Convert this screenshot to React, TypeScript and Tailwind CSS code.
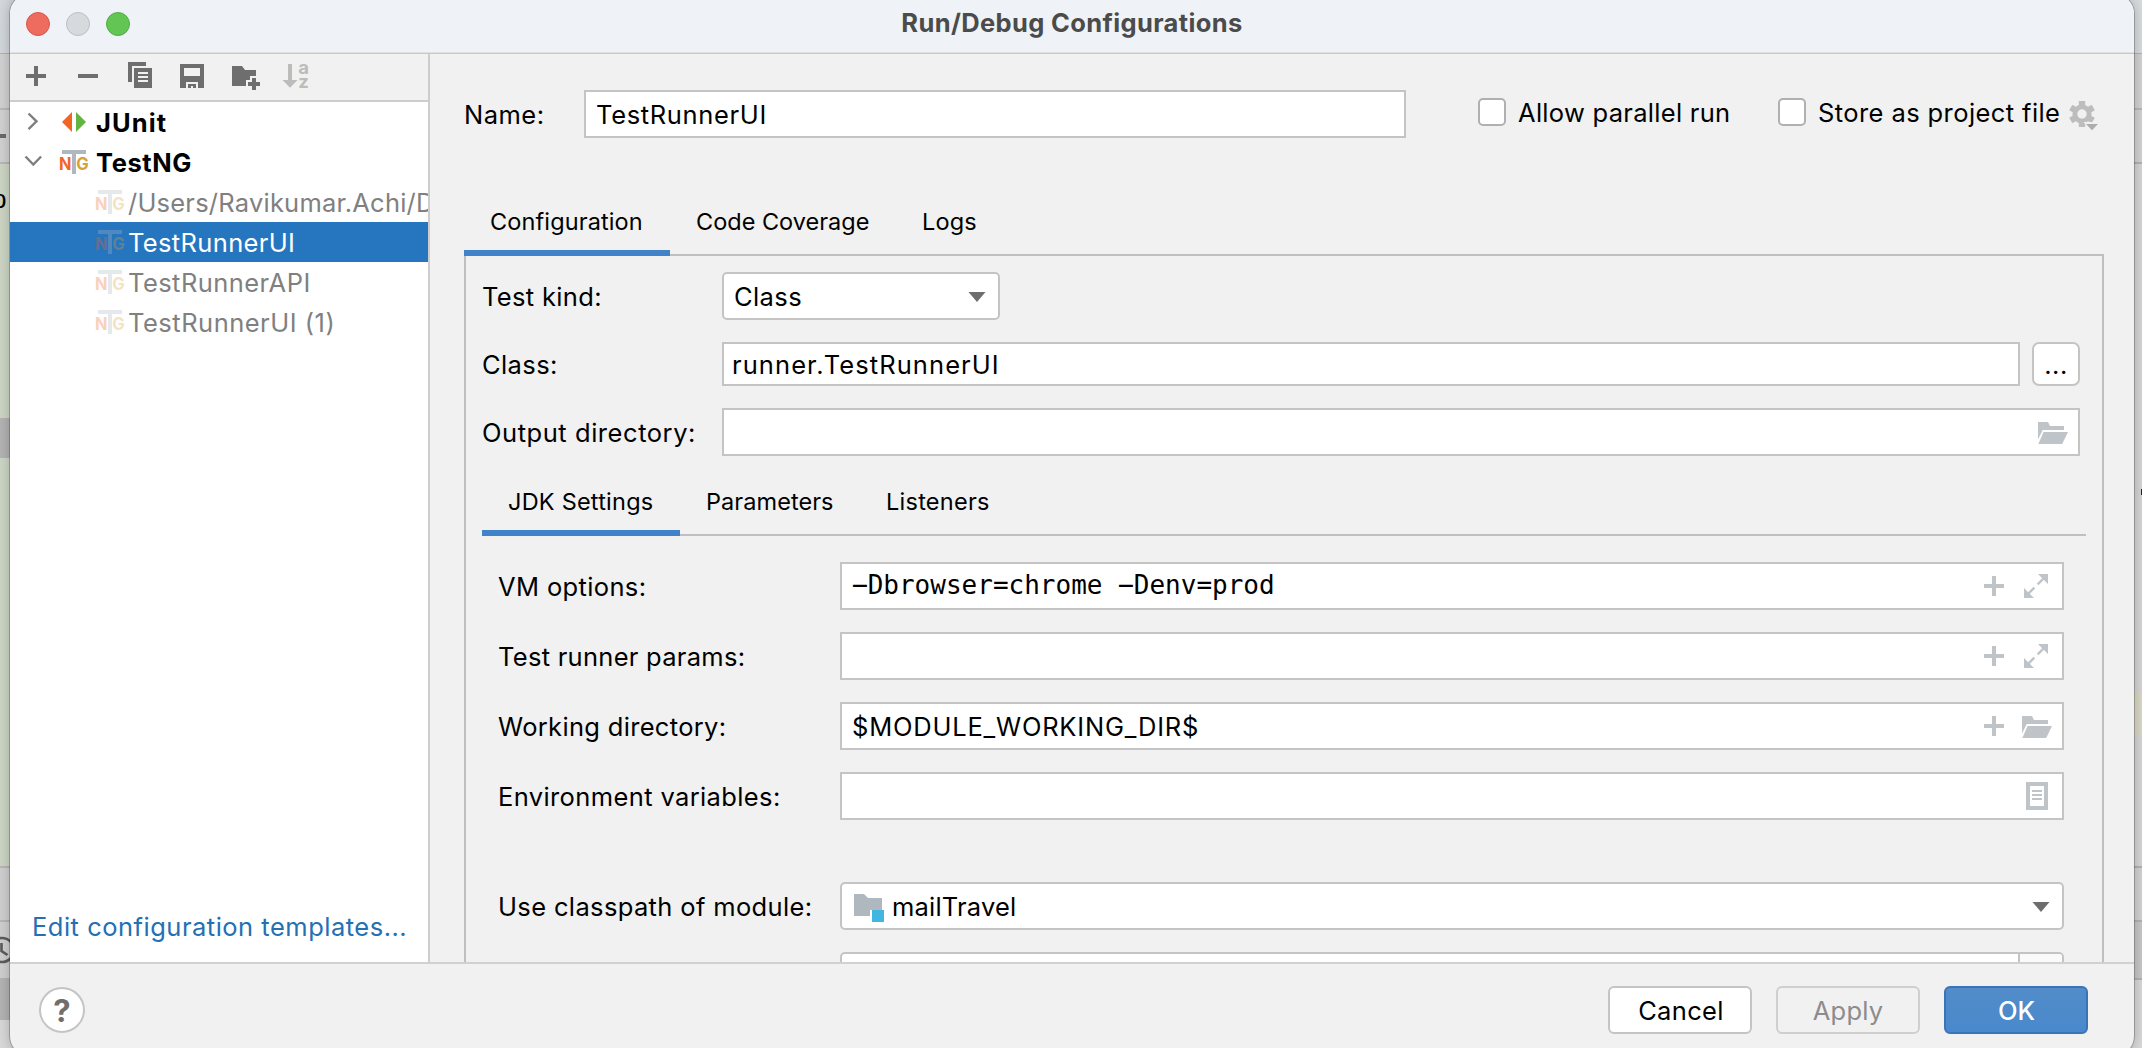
import React from "react";

/* ---------- text ---------- */

function Txt({ className = "", children }: { className?: string; children: React.ReactNode }) {
  return <span className={`block shrink-0 whitespace-nowrap text-[25.5px] leading-[31px] ${className}`}>{children}</span>;
}

/* ---------- icons ---------- */

const ToolIcon = ({ children, muted }: { children: React.ReactNode; muted?: boolean }) => (
  <svg viewBox="0 0 32 32" className={`size-8 shrink-0 overflow-visible ${muted ? "fill-[#bcbcbc]" : "fill-[#6e6e6e]"}`}>
    {children}
  </svg>
);

const Plus = ({ className }: { className: string }) => (
  <svg viewBox="0 0 20 20" className={`size-5 shrink-0 fill-[#bfc4c9] ${className}`}>
    <path d="M8 0h4v8h8v4h-8v8H8v-8H0V8h8z" />
  </svg>
);

const Expand = ({ className }: { className: string }) => (
  <svg viewBox="0 0 24 24" className={`size-6 shrink-0 fill-[#bfc4c9] stroke-[#bfc4c9] ${className}`}>
    <path stroke="none" d="M14 0h10v10zM0 24V14l10 10z" />
    <path fill="none" strokeWidth="2.4" d="M13.7 10.3 20 4M10.3 13.7 4 20" />
  </svg>
);

const OpenFolder = ({ className }: { className: string }) => (
  <svg viewBox="0 0 30 22" className={`h-[22px] w-[30px] shrink-0 fill-[#bfc4c9] ${className}`}>
    <path d="M0 0h10l2 4h14v4H4.7L0 17.5z" />
    <path d="M5.6 10H30l-5.8 12H.3z" />
  </svg>
);

const ListIcon = ({ className }: { className: string }) => (
  <svg viewBox="0 0 22 28" className={`h-7 w-[22px] shrink-0 fill-[#bfc4c9] ${className}`}>
    <path fillRule="evenodd" d="M0 0h22v28H0zM4 4v20h14V4z" />
    <path d="M6 8h10v2H6zM6 12h10v2H6zM6 16h10v2H6z" />
  </svg>
);

const Caret = ({ className }: { className: string }) => (
  <svg viewBox="0 0 18 10" className={`h-[10px] w-[18px] shrink-0 fill-[#6e6e6e] ${className}`}>
    <path d="M.5 0h17L9 10z" />
  </svg>
);

const ModuleIcon = () => (
  <svg viewBox="0 0 30 28" className="mt-[10px] h-7 w-[30px] shrink-0">
    <path fill="#afb8bf" d="M0 0h10l4 4h14v12H16v6H0z" />
    <path fill="#40b6e0" d="M18 16h12v12H18z" />
  </svg>
);

const Gear = () => (
  <svg viewBox="0 0 30 30" className="ml-[10px] mt-[11px] size-[30px] shrink-0">
    <g fill="#bdbdbd">
      <circle cx="13" cy="13" r="9.6" />
      {["rotate(0 13 13)", "rotate(60 13 13)", "rotate(120 13 13)"].map((t) => (
        <rect key={t} x="9.8" y="0" width="6.4" height="26" rx="0.6" transform={t} />
      ))}
    </g>
    <circle cx="13" cy="13" r="4.7" fill="#f1f1f1" />
    <path fill="#f1f1f1" d="M14.5 21H32l-8.8 10z" />
    <path fill="#adadad" d="M17 23h12l-6 6.3z" />
  </svg>
);

const JUnitIcon = () => (
  <svg viewBox="0 0 28 24" className="mt-2 h-6 w-7 shrink-0">
    <path fill="#f26522" d="M12 2v20L2 12z" />
    <path fill="#62b543" d="M16 2v20l10-10z" />
  </svg>
);

const TestNGIcon = ({ faded }: { faded?: boolean }) => (
  <svg viewBox="0 0 28 24" className={`mt-2 h-6 w-7 shrink-0 overflow-visible ${faded ? "opacity-30" : ""}`}>
    <path fill="#afb8bf" d="M2 0h24v4H16v20h-4V4H2z" />
    <text x="-1" y="20.3" fontSize="17.5" fontWeight="700" fill="#f26522" textLength="12.5" lengthAdjust="spacingAndGlyphs">N</text>
    <text x="16.3" y="20.3" fontSize="17.5" fontWeight="700" fill="#dba034" textLength="12.5" lengthAdjust="spacingAndGlyphs">G</text>
  </svg>
);

/* ---------- form pieces ---------- */

function Tab({ active, className, children }: { active?: boolean; className: string; children: React.ReactNode }) {
  return (
    <div className={`h-14 shrink-0 whitespace-nowrap pl-[26px] pt-[7px] text-[23.5px] leading-[29px] ${active ? "border-b-[6px] border-[#4083c9]" : "border-b-2 border-[#bfbfbf]"} ${className}`}>
      {children}
    </div>
  );
}

function Box({ className, children }: { className: string; children?: React.ReactNode }) {
  return <div className={`flex shrink-0 items-start border-2 border-[#c4c4c4] bg-white ${className}`}>{children}</div>;
}

function Row({ label, tracking, className = "", children }: { label: string; tracking: string; className?: string; children?: React.ReactNode }) {
  return (
    <div className={`ml-4 flex h-12 shrink-0 items-start ${className}`}>
      <Txt className={`mt-[9px] w-[342px] ${tracking}`}>{label}</Txt>
      {children}
    </div>
  );
}

function Check({ label, tracking, className }: { label: string; tracking: string; className: string }) {
  return (
    <div className={`flex shrink-0 ${className}`}>
      <div className="mt-2 size-7 shrink-0 rounded-[5px] border-2 border-[#b0b0b0] bg-white" />
      <Txt className={`ml-[12px] mt-[7px] ${tracking}`}>{label}</Txt>
    </div>
  );
}

/* Wide option dash, as in the monospace editor font. */
const Dash = () => <span className="relative -top-px inline-block scale-x-[2.1]">-</span>;

/* ---------- regions ---------- */

function Backdrop() {
  return (
    <div className="absolute inset-0 flex justify-between overflow-hidden bg-[#cdcdcd]">
      <div className="flex w-12 flex-col">
        <div className="h-[53px] bg-[#d3d8dc]" />
        <div className="h-[55px] border-t border-[#b4b4b4] bg-[#d2d2d2]" />
        <div className="h-[54px] border-t-2 border-[#bababa] bg-[#d2d2d2] pt-6">
          <div className="h-1 w-[6px] bg-[#6a6a6a]" />
        </div>
        <div className="h-[256px] border-t-2 border-[#b8b8b8] bg-[#ced7c6] pt-[15px] text-black">
          <div className="ml-[-8px] text-[26px] leading-[40px] font-['Liberation_Sans']">p</div>
        </div>
        <div className="h-[40px] bg-[#b4b4b4]" />
        <div className="h-[408px] bg-[#ced7c6]" />
        <div className="h-[54px] border-t-2 border-[#b8b8b8] bg-[#d0d0d0]" />
        <div className="h-[58px] border-t-2 border-[#b8b8b8] bg-[#d0d0d0] pt-[14px]">
          <svg viewBox="0 0 28 28" className="ml-[-12px] size-7 fill-none stroke-[#5c5c5c] stroke-[2.6]">
            <circle cx="14" cy="14" r="12" />
            <path d="M13.5 7v8l6 4" />
          </svg>
        </div>
        <div className="h-[42px] bg-[#b4b4b4]" />
        <div className="grow bg-[#d9d9d9]" />
      </div>
      <div className="flex w-12 flex-col">
        <div className="h-[53px] bg-[#d9dde0]" />
        <div className="h-[55px] border-t border-[#b4b4b4] bg-[#d3d3d3]" />
        <div className="h-[54px] border-t-2 border-[#b8b8b8] bg-[#d3d3d3]" />
        <div className="h-[530px] border-t-2 border-[#b4b4b4] bg-[#d6d6d6] pt-[325px]">
          <div className="ml-auto h-[6px] w-px bg-[#222]" />
        </div>
        <div className="h-11 bg-[#dad9c8]" />
        <div className="h-[130px] bg-[#d6d6d6]" />
        <div className="h-[54px] border-t-2 border-[#b4b4b4] bg-[#d3d3d3]" />
        <div className="h-[58px] border-t-2 border-[#b4b4b4] bg-[#c8c8c8]" />
        <div className="grow border-t-2 border-[#b4b4b4] bg-[#d9d9d9]" />
      </div>
    </div>
  );
}

function Sidebar() {
  const children = [
    { name: "/Users/Ravikumar.Achi/D", tracking: "tracking-[0.22px]" },
    { name: "TestRunnerUI", tracking: "tracking-[0.35px]", selected: true },
    { name: "TestRunnerAPI", tracking: "tracking-[0.44px]" },
    { name: "TestRunnerUI (1)", tracking: "tracking-[0.5px]" },
  ];
  return (
    <div className="flex w-[420px] shrink-0 flex-col border-r-2 border-[#cdcdcd] bg-white">
      <div className="flex h-12 shrink-0 gap-5 border-b-2 border-[#cdcdcd] bg-[#f1f1f1] pl-[10px] pt-[6px]">
        <ToolIcon><path d="M14 6h4v8h8v4h-8v8h-4v-8H6v-4h8z" /></ToolIcon>
        <ToolIcon><path d="M6 14h20v4H6z" /></ToolIcon>
        <ToolIcon>
          <path d="M4 2h18v4H8v16H4z" />
          <path fillRule="evenodd" d="M10 8h18v20H10zM14 12v2h10v-2zM14 16v2h10v-2zM14 20v2h10v-2z" />
        </ToolIcon>
        <ToolIcon>
          <path fillRule="evenodd" d="M4 4h24v24h-6v-6H10v6H4zM8 8v8h16V8z" />
          <path d="M12 24h8v4h-3v-2h-2v2h-3z" />
        </ToolIcon>
        <ToolIcon>
          <path d="M4 6h10l3 4h11v6h-6v4h-4v6H4z" />
          <path d="M24 18h4v4h4v4h-4v4h-4v-4h-4v-4h4z" />
        </ToolIcon>
        <ToolIcon muted>
          <path d="M8 4h4v16h5.5L10 27.7 2.5 20H8z" />
          <text x="18.3" y="14.3" fontSize="18.5" fontWeight="700">a</text>
          <text x="18.3" y="28" fontSize="18.5" fontWeight="700">z</text>
        </ToolIcon>
      </div>
      <div className="flex h-10 shrink-0">
        <svg viewBox="0 0 50 40" className="h-10 w-[50px] shrink-0 fill-none stroke-[#7f7f7f] stroke-[2.4]">
          <path d="m18.5 11.5 8 7.8-8 7.8" />
        </svg>
        <JUnitIcon />
        <Txt className="ml-2 mt-[5px] font-bold tracking-[1.1px]">JUnit</Txt>
      </div>
      <div className="flex h-10 shrink-0">
        <svg viewBox="0 0 50 40" className="h-10 w-[50px] shrink-0 fill-none stroke-[#7f7f7f] stroke-[2.4]">
          <path d="m15.5 14.5 7.8 8 7.8-8" />
        </svg>
        <TestNGIcon />
        <Txt className="ml-2 mt-[5px] font-bold tracking-[0.6px]">TestNG</Txt>
      </div>
      {children.map((c) => (
        <div key={c.name} className={`flex h-10 shrink-0 overflow-hidden pl-[86px] ${c.selected ? "bg-[#2675bf] text-white" : "text-[#808080]"}`}>
          <TestNGIcon faded />
          <Txt className={`ml-1 mt-[5px] ${c.tracking}`}>{c.name}</Txt>
        </div>
      ))}
      <Txt className="mb-5 ml-[22px] mt-auto tracking-[0.5px] text-[#2470b3]">Edit configuration templates...</Txt>
    </div>
  );
}

function Editor() {
  return (
    <div className="flex grow flex-col overflow-hidden pl-[34px] pr-[30px] pt-9">
      <div className="flex h-12 shrink-0 items-start">
        <Txt className="mt-[9px] w-[120px] tracking-[0.5px]">Name:</Txt>
        <Box className="h-12 w-[822px] pl-[10px] pt-[7px]"><Txt className="tracking-[0.66px]">TestRunnerUI</Txt></Box>
        <Check className="ml-[72px] w-[300px]" label="Allow parallel run" tracking="tracking-[0.29px]" />
        <Check className="w-[281px]" label="Store as project file" tracking="tracking-[0.41px]" />
        <Gear />
      </div>

      <div className="mt-[62px] flex shrink-0">
        <Tab active className="w-[206px] tracking-[0.12px]">Configuration</Tab>
        <Tab className="w-[226px]">Code Coverage</Tab>
        <Tab className="grow tracking-[0.19px]">Logs</Tab>
      </div>

      <div className="flex grow flex-col border-x-2 border-[#bfbfbf] pl-4 pt-4">
        <div className="flex h-12 shrink-0 items-start">
          <Txt className="mt-[9px] w-60 tracking-[0.33px]">Test kind:</Txt>
          <Box className="h-12 w-[278px] justify-between rounded-[5px] pl-[10px] pr-3 pt-[7px]">
            <Txt className="tracking-[0.4px]">Class</Txt>
            <Caret className="mt-[11px]" />
          </Box>
        </div>
        <div className="mt-[22px] flex h-11 shrink-0 items-start">
          <Txt className="mt-[7px] w-60 tracking-[0.41px]">Class:</Txt>
          <Box className="h-11 w-[1298px] pl-2 pt-[5px]"><Txt className="tracking-[1.08px]">runner.TestRunnerUI</Txt></Box>
          <Box className="ml-3 h-11 w-12 justify-center rounded-[7px] pt-[5px]"><Txt className="tracking-[0.5px]">...</Txt></Box>
        </div>
        <div className="mt-[22px] flex h-12 shrink-0 items-start">
          <Txt className="mt-[9px] w-60 tracking-[0.55px]">Output directory:</Txt>
          <Box className="h-12 w-[1358px] justify-end pr-[10px]"><OpenFolder className="mt-3" /></Box>
        </div>

        <div className="mt-6 flex w-[1604px] shrink-0">
          <Tab active className="w-[198px] tracking-[0.22px]">JDK Settings</Tab>
          <Tab className="w-[180px] tracking-[0.06px]">Parameters</Tab>
          <Tab className="grow tracking-[0.25px]">Listeners</Tab>
        </div>

        <Row className="mt-[26px]" label="VM options:" tracking="tracking-[0.36px]">
          <Box className="h-12 w-[1224px] pl-[10px] pr-[14px]">
            <div className="mt-[6px] whitespace-pre font-['DejaVu_Sans_Mono',monospace] text-[26px] leading-[30px]">
              <Dash />Dbrowser=chrome <Dash />Denv=prod
            </div>
            <Plus className="ml-auto mt-3" />
            <Expand className="ml-5 mt-[10px]" />
          </Box>
        </Row>
        <Row className="mt-[22px]" label="Test runner params:" tracking="tracking-[0.28px]">
          <Box className="h-12 w-[1224px] pr-[14px]">
            <Plus className="ml-auto mt-3" />
            <Expand className="ml-5 mt-[10px]" />
          </Box>
        </Row>
        <Row className="mt-[22px]" label="Working directory:" tracking="tracking-[0.32px]">
          <Box className="h-12 w-[1224px] pl-[10px] pr-[10px]">
            <Txt className="mt-[7px] tracking-[0.79px]">$MODULE_WORKING_DIR$</Txt>
            <Plus className="ml-auto mt-3" />
            <OpenFolder className="ml-[18px] mt-3" />
          </Box>
        </Row>
        <Row className="mt-[22px]" label="Environment variables:" tracking="tracking-[0.38px]">
          <Box className="h-12 w-[1224px] justify-end pr-[14px]"><ListIcon className="mt-2" /></Box>
        </Row>
        <Row className="mt-[62px]" label="Use classpath of module:" tracking="tracking-[0.36px]">
          <Box className="h-12 w-[1224px] rounded-[5px] pl-3 pr-3">
            <ModuleIcon />
            <Txt className="ml-2 mt-[7px] tracking-[0.2px]">mailTravel</Txt>
            <Caret className="ml-auto mt-[18px]" />
          </Box>
        </Row>
        <div className="ml-[358px] mt-[22px] flex h-12 w-[1224px] shrink-0 overflow-hidden rounded-[5px] border-2 border-[#c4c4c4] bg-white">
          <div className="grow border-r-2 border-[#c4c4c4]" />
          <div className="w-[42px] bg-[#fafafa]" />
        </div>
      </div>
    </div>
  );
}

function Footer() {
  return (
    <div className="flex h-[94px] shrink-0 items-start border-t-2 border-[#d1d1d1] pl-[29px] pr-[46px] pt-[22px]">
      <div className="mt-px flex size-[46px] items-center justify-center rounded-full border-2 border-[#c4c4c4] bg-white text-[31px] font-bold leading-none text-[#6e6e6e]">?</div>
      <button className="ml-auto flex h-12 w-36 justify-center rounded-md border-2 border-[#c4c4c4] bg-white pl-[2px] pt-[7px]">
        <Txt className="tracking-[0.35px]">Cancel</Txt>
      </button>
      <button className="ml-6 flex h-12 w-36 justify-center rounded-md border-2 border-[#cfcfcf] pt-[7px] text-[#8c8c8c]">
        <Txt className="tracking-[0.19px]">Apply</Txt>
      </button>
      <button className="ml-6 flex h-12 w-36 justify-center rounded-md border-2 border-[#3a74b8] bg-linear-to-b from-[#528cc9] to-[#4989cc] pl-px pt-[7px] font-medium text-white">
        <Txt>OK</Txt>
      </button>
    </div>
  );
}

export default function App() {
  return (
    <div className="relative h-[1048px] w-[2142px] overflow-hidden font-['Inter',sans-serif] text-black">
      <Backdrop />
      <div className="relative -mt-[6px] ml-[10px] flex h-[1062px] w-[2124px] flex-col overflow-hidden rounded-[20px] bg-[#f1f1f1] shadow-[0_0_0_1px_rgba(0,0,0,0.22),0_0_14px_rgba(0,0,0,0.25)]">
        <div className="relative flex h-[60px] shrink-0 justify-center border-b border-[#c8c8c8] bg-[#eff3f7] pt-[13px] shadow-[inset_0_-1px_0_#dfe1e3]">
          <div className="absolute left-4 top-[18px] flex gap-4">
            <div className="size-6 rounded-full border border-[#d8574c] bg-[#ed6b5f]" />
            <div className="size-6 rounded-full border border-[#bbbfc2] bg-[#d6dadd]" />
            <div className="size-6 rounded-full border border-[#50ae45] bg-[#62c554]" />
          </div>
          <Txt className="font-bold tracking-[0.36px] text-[#4b4b4b]">Run/Debug Configurations</Txt>
        </div>
        <div className="flex h-[908px] shrink-0">
          <Sidebar />
          <Editor />
        </div>
        <Footer />
      </div>
    </div>
  );
}
